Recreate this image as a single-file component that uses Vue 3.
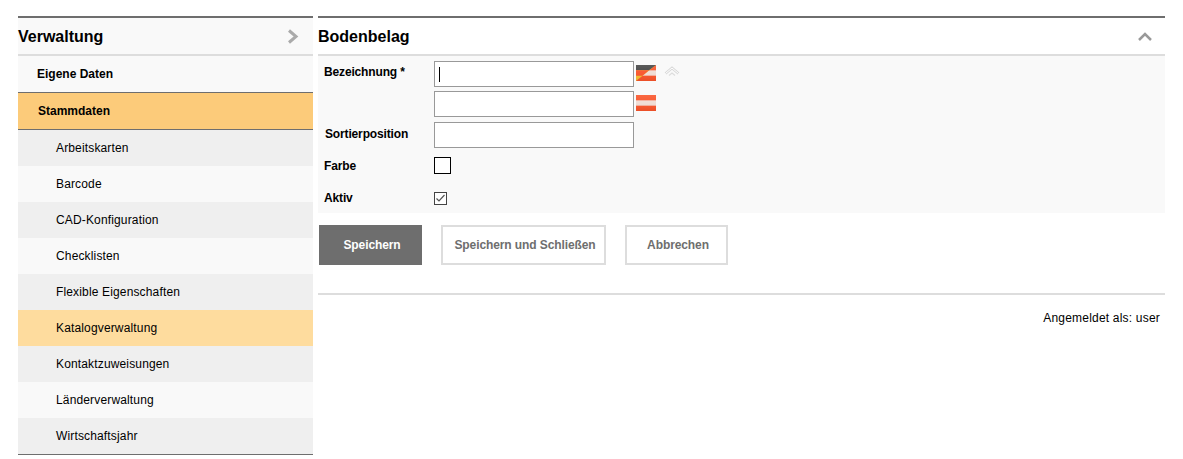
<script setup>
const subItems = [
  { label: 'Arbeitskarten' },
  { label: 'Barcode' },
  { label: 'CAD-Konfiguration' },
  { label: 'Checklisten' },
  { label: 'Flexible Eigenschaften' },
  { label: 'Katalogverwaltung', active: true },
  { label: 'Kontaktzuweisungen' },
  { label: 'Länderverwaltung' },
  { label: 'Wirtschaftsjahr' }
];
</script>

<template>
  <div class="page">
    <aside class="sidebar">
      <div class="panel-head">
        <h2>Verwaltung</h2>
        <svg class="chevron" width="14" height="16" viewBox="0 0 14 16">
          <path d="M3 2.500l7 6-7 6" fill="none" stroke="#aaa" stroke-width="3" />
        </svg>
      </div>
      <div class="nav-top first">Eigene Daten</div>
      <div class="nav-top selected">Stammdaten</div>
      <div
        v-for="(item, i) in subItems"
        :key="item.label"
        class="nav-sub"
        :class="{ alt: i % 2 === 1, active: item.active }"
      >{{ item.label }}</div>
    </aside>

    <main class="content">
      <div class="panel-head main-head">
        <h2>Bodenbelag</h2>
        <svg class="collapse" width="16" height="10" viewBox="0 0 16 10">
          <path d="M2 9l6-6 6 6" fill="none" stroke="#999" stroke-width="2.500" />
        </svg>
      </div>

      <form class="form" @submit.prevent>
        <div class="row name-row">
          <label>Bezeichnung *</label>
          <div class="lang-inputs">
            <div class="lang-line">
              <div class="text-field"><span class="caret"></span></div>
              <svg class="flag" width="20" height="16" viewBox="0 0 20 15" preserveAspectRatio="none">
                <defs>
                  <linearGradient id="gloss" x1="0" y1="0" x2="0" y2="1">
                    <stop offset="0" stop-color="#fff" stop-opacity=".12" />
                    <stop offset=".5" stop-color="#fff" stop-opacity=".04" />
                    <stop offset="1" stop-color="#000" stop-opacity=".06" />
                  </linearGradient>
                </defs>
                <rect width="20" height="15" fill="#f9542a" />
                <rect y="5" width="20" height="5" fill="#f0dcd4" />
                <path d="M0 0h20L0 15z" fill="#f7bd2e" />
                <path d="M0 0h20L13 5H0z" fill="#444" />
                <path d="M0 5h13L6.500 10H0z" fill="#f9542a" />
                <rect width="20" height="15" fill="url(#gloss)" />
              </svg>
              <svg class="up-icon" width="16" height="11" viewBox="0 0 16 11">
                <path d="M1.500 7.500L8 2l6.500 5.500" fill="none" stroke="#d8d8d8" stroke-width="2.500" />
                <path d="M1.500 7.500L8 2l6.500 5.500" fill="none" stroke="#fff" stroke-width="1" />
                <path d="M5 9.500L8 7l3 2.500" fill="none" stroke="#ddd" stroke-width="1.200" />
              </svg>
            </div>
            <div class="lang-line">
              <div class="text-field"></div>
              <svg class="flag" width="20" height="16" viewBox="0 0 20 15" preserveAspectRatio="none">
                <rect width="20" height="15" fill="#f9542a" />
                <rect y="5" width="20" height="5" fill="#f0dcd4" />
                <rect width="20" height="15" fill="url(#gloss)" />
              </svg>
            </div>
          </div>
        </div>
        <div class="row sort-row">
          <label class="sort-label">Sortierposition</label>
          <div class="text-field"></div>
        </div>
        <div class="row color-row">
          <label>Farbe</label>
          <div class="swatch"></div>
        </div>
        <div class="row active-row">
          <label>Aktiv</label>
          <svg class="checkbox" width="13" height="13" viewBox="0 0 13 13">
            <rect x=".5" y=".5" width="12" height="12" fill="#fff" stroke="#444" />
            <path d="M2.500 6.500l2.500 2.500 5.500-6" fill="none" stroke="#555" stroke-width="1.200" />
          </svg>
        </div>
      </form>

      <div class="actions">
        <button class="btn primary" type="button">Speichern</button>
        <button class="btn save-close" type="button">Speichern und Schließen</button>
        <button class="btn cancel" type="button">Abbrechen</button>
      </div>

      <div class="status">Angemeldet als: user</div>
    </main>
  </div>
</template>

<style>
body {
  background: #fff;
}
</style>

<style scoped>
.page {
  display: flex;
  align-items: flex-start;
  gap: 5px;
  padding: 16px 18px 0;
  font-family: "Liberation Sans", Arial, sans-serif;
  font-size: 12px;
  color: #000;
}

.sidebar {
  width: 295px;
  flex-shrink: 0;
  border-bottom: 1px solid #6e6e6e;
}

.content {
  width: 847px;
  flex-shrink: 0;
}

.panel-head {
  display: flex;
  align-items: center;
  justify-content: space-between;
  height: 36px;
  box-sizing: content-box;
  border-top: 2px solid #6e6e6e;
  border-bottom: 2px solid #ddd;
  background: #f9f9f9;
}

.main-head {
  background: #fff;
}

h2 {
  margin: 0;
  padding-top: 1px;
  font-size: 16px;
  font-weight: bold;
}

.chevron {
  margin-right: 13px;
}

.collapse {
  margin-right: 12px;
}

.nav-top {
  height: 36px;
  line-height: 36px;
  padding-left: 20px;
  font-weight: bold;
  background: #f9f9f9;
  border-bottom: 1px solid #6e6e6e;
}

.nav-top.first {
  padding-left: 19px;
}

.nav-top.selected {
  background: #fccb7a;
}

.nav-sub {
  height: 36px;
  line-height: 36px;
  padding-left: 38px;
  letter-spacing: .15px;
  background: #efefef;
}

.nav-sub.alt {
  background: #f9f9f9;
}

.nav-sub.active {
  background: #fedc9e;
}

.form {
  background: #f9f9f9;
  padding: 5px 0 8px;
}

.row {
  display: flex;
  align-items: flex-start;
}

.row label {
  width: 116px;
  padding-left: 6px;
  box-sizing: border-box;
  font-weight: bold;
  letter-spacing: -.15px;
}

.name-row label {
  padding-top: 4px;
}

.lang-inputs {
  display: flex;
  flex-direction: column;
  gap: 4px;
}

.lang-line {
  display: flex;
  align-items: flex-start;
}

.text-field {
  width: 200px;
  height: 26px;
  box-sizing: border-box;
  border: 1px solid #999;
  background: #fff;
  display: flex;
  align-items: center;
  padding-left: 4px;
}

.caret {
  width: 1px;
  height: 15px;
  background: #000;
}

.flag {
  margin: 4px 0 0 2px;
  filter: blur(.5px);
}

.up-icon {
  margin: 5px 0 0 8px;
}

.sort-row {
  margin-top: 5px;
}

.sort-label {
  padding-left: 7px !important;
  padding-top: 5px;
}

.color-row {
  margin-top: 9px;
  align-items: center;
}

.swatch {
  width: 17px;
  height: 17px;
  box-sizing: border-box;
  border: 1px solid #000;
  background: #fff;
}

.active-row {
  margin-top: 17px;
  align-items: center;
}

.actions {
  display: flex;
  gap: 19px;
  padding: 12px 0 28px 1px;
  border-bottom: 2px solid #ddd;
}

.btn {
  height: 40px;
  padding: 0 0 0 3px;
  box-sizing: border-box;
  border: 2px solid #ddd;
  background: #fff;
  color: #6e6e6e;
  font: bold 12px "Liberation Sans", Arial, sans-serif;
  letter-spacing: -.1px;
}

.btn.primary {
  width: 103px;
  background: #6e6e6e;
  border-color: #6e6e6e;
  color: #fff;
}

.btn.save-close {
  width: 165px;
}

.btn.cancel {
  width: 103px;
}

.status {
  padding: 16px 5px 0 0;
  text-align: right;
  letter-spacing: .2px;
}
</style>
